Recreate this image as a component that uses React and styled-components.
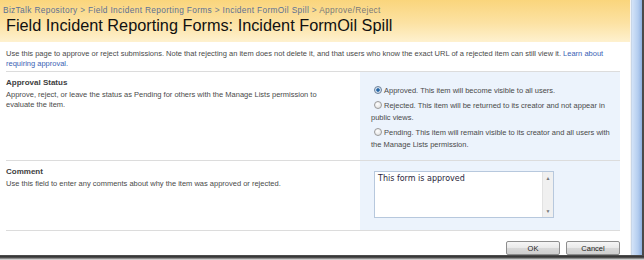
import React from "react";
import styled, { createGlobalStyle } from "styled-components";

const GlobalStyle = createGlobalStyle`
  html, body {
    margin: 0;
    padding: 0;
    background: #ffffff;
  }
  body {
    font-family: "Liberation Sans", Arial, sans-serif;
  }
`;

const Window = styled.div`
  width: 644px;
  height: 260px;
  display: flex;
  flex-direction: column;
  overflow: hidden;
  background: #ffffff;
`;

const Body = styled.div`
  flex: 1;
  display: flex;
  min-height: 0;
`;

const Page = styled.div`
  flex: 1;
  display: flex;
  flex-direction: column;
  background: #ffffff;
  border-right: 1px solid #f4f4f4;
`;

const Frame = styled.div`
  width: 10px;
  background: linear-gradient(to right, #d3e3f8 0%, #b4cdef 60%, #8fb0e0 100%);
  border-left: 1px solid #c8d6e8;
  border-right: 2px solid #4a4a4a;
`;

const Shadow = styled.div`
  height: 5px;
  background: linear-gradient(to bottom, #555 0%, #2e2e2e 40%, #9a9a9a 75%, #f0f0f0 100%);
`;

const Header = styled.div`
  height: 42px;
  padding: 5px 0 0 3px;
  box-sizing: border-box;
  background: linear-gradient(to bottom, #fad57c 0%, #fce2a3 55%, #fef1cf 100%);
`;

const Crumbs = styled.div`
  font-size: 8.3px;
  letter-spacing: 0.35px;
  color: #6f7c8c;
  white-space: nowrap;
`;

const Crumb = styled.span`
  color: ${({ $current }) => ($current ? "#7a7a7a" : "#5d7194")};
`;

const Title = styled.h1`
  margin: 1px 0 0 3px;
  font-size: 16.3px;
  font-weight: normal;
  color: #111;
  white-space: nowrap;
`;

const Intro = styled.p`
  margin: 0;
  padding: 7px 6px 0 6px;
  height: 30px;
  box-sizing: border-box;
  font-size: 7.5px;
  line-height: 10px;
  color: #4a4a4a;
  white-space: nowrap;
`;

const Link = styled.a`
  color: #3a62b4;
  text-decoration: none;
`;

const Section = styled.div`
  display: grid;
  grid-template-columns: 354px 260px;
  margin: 0 10px 0 6px;
  border-top: 1px solid #dcdcdc;
  height: ${({ $h }) => $h}px;
  box-sizing: border-box;
`;

const Info = styled.div`
  padding-top: 5px;
`;

const Label = styled.div`
  font-size: 8px;
  font-weight: bold;
  color: #404040;
  line-height: 11px;
`;

const Hint = styled.div`
  margin-top: 2px;
  font-size: 7.5px;
  line-height: 10px;
  color: #4a4a4a;
`;

const Panel = styled.div`
  background: #ecf3fc;
  padding: ${({ $top }) => $top}px 10px 0 11px;
  display: flex;
  flex-direction: column;
  gap: 3px;
`;

const Option = styled.label`
  font-size: 7.5px;
  line-height: 12px;
  color: #4a4a4a;
`;

const Radio = styled.input.attrs({ type: "radio" })`
  appearance: none;
  width: 8px;
  height: 8px;
  margin: 0 2px 0 3px;
  vertical-align: -1px;
  border-radius: 50%;
  border: 1px solid #9a9a9a;
  box-sizing: border-box;
  background: radial-gradient(circle at 40% 35%, #ffffff 0%, #dcdcdc 100%);
  &:checked {
    border-color: #6a7f99;
    background: radial-gradient(circle, #1e5d9c 0%, #2f6fae 35%, #c9d9ea 45%, #eef3f8 100%);
  }
`;

const Comment = styled.div`
  margin: 10px 0 0 3px;
  width: 180px;
  height: 47px;
  display: flex;
  border: 1px solid #b7c8dd;
  background: #ffffff;
  box-sizing: border-box;
`;

const TextBox = styled.textarea`
  flex: 1;
  border: none;
  resize: none;
  outline: none;
  padding: 2px 3px;
  font-family: "DejaVu Sans", Verdana, sans-serif;
  font-size: 8px;
  color: #2a1f3d;
  background: transparent;
`;

const Scroll = styled.div`
  width: 10px;
  background: #f0f0f0;
  border-left: 1px solid #e2e2e2;
  display: flex;
  flex-direction: column;
  justify-content: space-between;
  align-items: center;
  padding: 3px 0;
  font-size: 5px;
  color: #777;
`;

const Footer = styled.div`
  display: flex;
  justify-content: flex-end;
  gap: 6px;
  padding: 10px 10px 0 0;
`;

const Button = styled.button`
  width: 54px;
  height: 14px;
  padding: 0;
  font-family: "Liberation Sans", Arial, sans-serif;
  font-size: 7.5px;
  color: #222;
  border: 1px solid #8e8e8e;
  border-radius: 2px;
  background: linear-gradient(to bottom, #f6f6f6 0%, #e9e9e9 50%, #d9d9d9 51%, #cfcfcf 100%);
`;

export default function App() {
  return (
    <Window>
      <GlobalStyle />
      <Body>
        <Page>
          <Header>
            <Crumbs>
              <Crumb>BizTalk Repository</Crumb> &gt;{" "}
              <Crumb>Field Incident Reporting Forms</Crumb> &gt;{" "}
              <Crumb>Incident FormOil Spill</Crumb> &gt;{" "}
              <Crumb $current>Approve/Reject</Crumb>
            </Crumbs>
            <Title>Field Incident Reporting Forms: Incident FormOil Spill</Title>
          </Header>
          <Intro>
            Use this page to approve or reject submissions. Note that rejecting an item does not
            delete it, and that users who know the exact URL of a rejected item can still view it.{" "}
            <Link href="#">Learn about</Link>
            <br />
            <Link href="#">requiring approval.</Link>
          </Intro>
          <Section $h={90}>
            <Info>
              <Label>Approval Status</Label>
              <Hint>
                Approve, reject, or leave the status as Pending for others with the Manage Lists
                permission to
                <br />
                evaluate the item.
              </Hint>
            </Info>
            <Panel $top={13}>
              <Option>
                <Radio name="status" defaultChecked />
                Approved. This item will become visible to all users.
              </Option>
              <Option>
                <Radio name="status" />
                Rejected. This item will be returned to its creator and not appear in
                <br />
                public views.
              </Option>
              <Option>
                <Radio name="status" />
                Pending. This item will remain visible to its creator and all users with
                <br />
                the Manage Lists permission.
              </Option>
            </Panel>
          </Section>
          <Section $h={71}>
            <Info>
              <Label>Comment</Label>
              <Hint>Use this field to enter any comments about why the item was approved or rejected.</Hint>
            </Info>
            <Panel $top={0}>
              <Comment>
                <TextBox defaultValue="This form is approved" />
                <Scroll>
                  <span>▲</span>
                  <span>▼</span>
                </Scroll>
              </Comment>
            </Panel>
          </Section>
          <Section $h={1} />
          <Footer>
            <Button>OK</Button>
            <Button>Cancel</Button>
          </Footer>
        </Page>
        <Frame />
      </Body>
      <Shadow />
    </Window>
  );
}
